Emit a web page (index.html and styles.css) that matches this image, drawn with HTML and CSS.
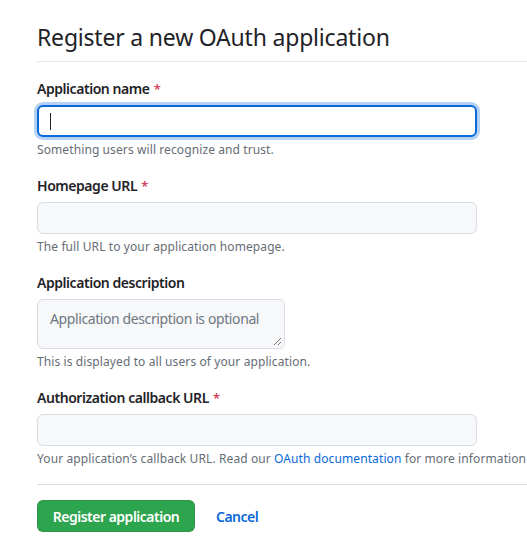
FILE: index.html
```html
<!DOCTYPE html>
<html>
<head>
<meta charset="utf-8">
<link rel="stylesheet" href="styles.css">
</head>
<body>
<div class="page">
  <div class="subhead">
    <h2 class="subhead-title">Register a new OAuth application</h2>
  </div>
  <form class="form">
    <div class="field">
      <label class="label">Application name <span class="req">*</span></label>
      <div class="input focused"><span class="caret"></span></div>
      <p class="note">Something users will recognize and trust.</p>
    </div>
    <div class="field">
      <label class="label">Homepage URL <span class="req">*</span></label>
      <div class="input"></div>
      <p class="note">The full URL to your application homepage.</p>
    </div>
    <div class="field">
      <label class="label">Application description</label>
      <div class="textarea">
        <span class="placeholder">Application description is optional</span>
        <svg class="grip" width="9" height="9" viewBox="0 0 9 9"><path d="M8 1L1 8M8 5L5 8" stroke="#777" stroke-width="1" fill="none"/></svg>
      </div>
      <p class="note">This is displayed to all users of your application.</p>
    </div>
    <div class="field">
      <label class="label">Authorization callback URL <span class="req">*</span></label>
      <div class="input"></div>
      <p class="note">Your application’s callback URL. Read our <a class="link" href="#">OAuth documentation</a> for more information.</p>
    </div>
    <div class="actions">
      <button type="button" class="btn-primary">Register application</button>
      <a class="cancel" href="#">Cancel</a>
    </div>
  </form>
</div>
</body>
</html>
```
FILE: styles.css
```css
html, body {
  margin: 0;
  padding: 0;
  background: #ffffff;
  overflow: hidden;
}
body {
  font-family: "Noto Sans", "Open Sans", sans-serif;
  color: #1f2328;
}
.page {
  width: 600px;
  padding-left: 37px;
  padding-top: 19px;
}
.subhead {
  border-bottom: 1px solid #e6e8eb;
  padding-bottom: 6px;
  margin-bottom: 16px;
}
.subhead-title {
  margin: 0;
  font-size: 23px;
  font-weight: 400;
  letter-spacing: -0.2px;
  line-height: 36px;
  color: #1f2328;
}
.form {
  display: flex;
  flex-direction: column;
}
.field {
  display: flex;
  flex-direction: column;
  margin-bottom: 16px;
}
.label {
  display: block;
  height: 21px;
  font-size: 14px;
  font-weight: 600;
  letter-spacing: -0.45px;
  line-height: 21px;
  margin-bottom: 6px;
}
.req {
  color: #d1425a;
  font-size: 13px;
  line-height: 1;
  margin-left: 1px;
}
.input {
  width: 440px;
  height: 32px;
  box-sizing: border-box;
  border: 1px solid #d8dee4;
  border-radius: 6px;
  background: #f6f8fa;
  display: flex;
  align-items: center;
  padding-left: 12px;
}
.input.focused {
  background: #ffffff;
  border: 2px solid #0969da;
  box-shadow: 0 0 0 3px rgba(9, 105, 218, 0.3);
  padding-left: 11px;
}
.caret {
  width: 1px;
  height: 17px;
  background: #1f2328;
}
.textarea {
  position: relative;
  width: 248px;
  height: 50px;
  box-sizing: border-box;
  border: 1px solid #d8dee4;
  border-radius: 6px;
  background: #f6f8fa;
  padding: 7px 12px;
}
.placeholder {
  font-size: 14px;
  letter-spacing: -0.4px;
  line-height: 20px;
  color: #6e7781;
  white-space: nowrap;
}
.grip {
  position: absolute;
  right: 2px;
  bottom: 2px;
}
.note {
  margin: 4px 0 0 0;
  height: 18px;
  font-size: 12px;
  letter-spacing: 0.1px;
  line-height: 18px;
  color: #656d76;
  white-space: nowrap;
}
.link {
  color: #0969da;
  text-decoration: none;
}
.actions {
  border-top: 1px solid #d8dee4;
  padding-top: 15px;
  display: flex;
  align-items: center;
  width: 520px;
}
.btn-primary {
  width: 158px;
  height: 32px;
  border: 1px solid rgba(31, 35, 40, 0.15);
  border-radius: 6px;
  background: #2da44e;
  color: #ffffff;
  font-family: "Noto Sans", "Open Sans", sans-serif;
  font-size: 14px;
  font-weight: 600;
  letter-spacing: -0.5px;
  padding: 0;
}
.cancel {
  margin-left: 21px;
  font-size: 14px;
  font-weight: 600;
  letter-spacing: -0.5px;
  color: #0969da;
  text-decoration: none;
}
```
